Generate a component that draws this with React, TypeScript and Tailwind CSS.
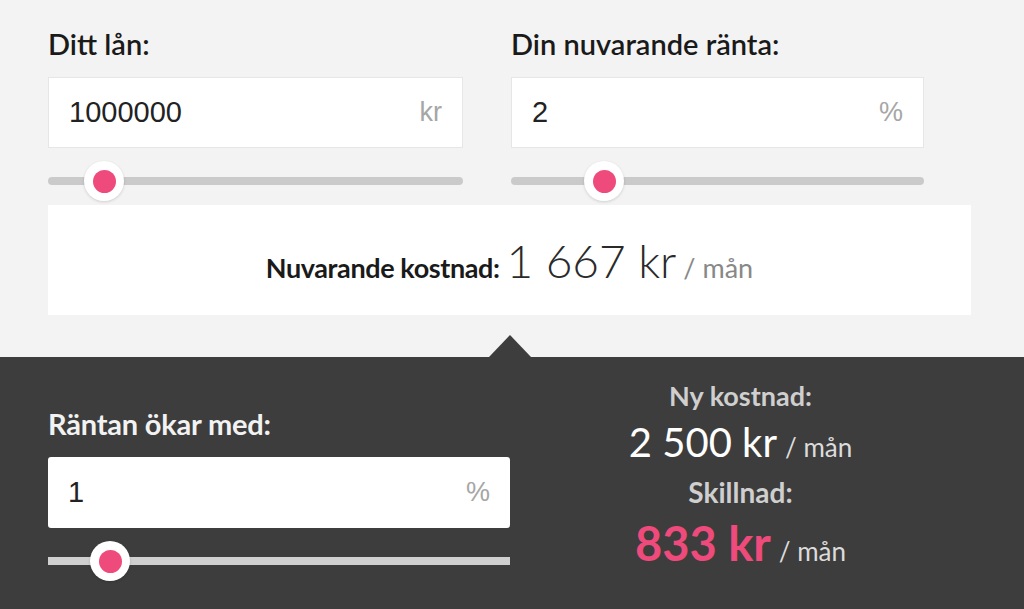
import React from "react";

const font = "font-['Lato','Open_Sans',sans-serif]";

function Slider({ pos, dark }: { pos: number; dark?: boolean }) {
  return (
    <div className="relative h-10 flex items-center">
      <div
        className={`w-full h-2 ${dark ? "bg-[#d0d0d0]" : "bg-[#cacaca] rounded-full"}`}
      />
      <div
        className="absolute top-1/2 -translate-x-1/2 -translate-y-1/2 w-10 h-10 rounded-full bg-white shadow-[0_1px_3px_rgba(0,0,0,0.15)] flex items-center justify-center"
        style={{ left: pos }}
      >
        <div className="w-[23px] h-[23px] rounded-full bg-[#ee4a7b]" />
      </div>
    </div>
  );
}

function Field({
  label,
  value,
  unit,
  dark,
  slider,
}: {
  label: string;
  value: string;
  unit: string;
  dark?: boolean;
  slider: number;
}) {
  return (
    <div className="flex flex-col">
      <div
        className={`${font} text-[29px] leading-[36px] ${
          dark ? "text-[#f2f2f2] font-bold tracking-[-0.2px]" : "text-[#1a1a1a] font-semibold"
        }`}
      >
        {label}
      </div>
      <div
        className={`mt-[15px] h-[71px] bg-white flex items-center justify-between pl-5 pr-5 ${
          dark ? "rounded-[3px]" : "border border-[#e6e6e6]"
        }`}
      >
        <span className="font-['Liberation_Sans',Arial,sans-serif] text-[29px] text-[#222]">
          {value}
        </span>
        <span className="font-['Liberation_Sans',Arial,sans-serif] text-[27px] text-[#a6a6a6]">
          {unit}
        </span>
      </div>
      <div className="mt-[13px]">
        <Slider pos={slider} dark={dark} />
      </div>
    </div>
  );
}

export default function App() {
  return (
    <div className="w-[1024px] h-[609px] overflow-hidden bg-[#f3f3f3] flex flex-col">
      <div className="pl-12 pr-[53px] pt-[26px] flex-1 flex flex-col">
        <div className="grid grid-cols-[415px_413px] gap-x-12">
          <Field label="Ditt lån:" value="1000000" unit="kr" slider={56} />
          <Field label="Din nuvarande ränta:" value="2" unit="%" slider={93} />
        </div>
        <div className="mt-[4px] h-[110px] bg-white flex items-baseline justify-center gap-[7px] pt-[30px]">
          <span className={`${font} text-[27px] font-bold text-[#1a1a1a] tracking-[-0.4px]`}>
            Nuvarande kostnad:
          </span>
          <span className={`${font} text-[46px] font-light text-[#2a2a2a] leading-[52px]`}>
            1 667 kr
          </span>
          <span className={`${font} text-[27px] text-[#888]`}>/ mån</span>
        </div>
        <div className="flex-1 flex items-end justify-center">
          <div className="w-0 h-0 border-l-[21px] border-r-[21px] border-b-[22px] border-l-transparent border-r-transparent border-b-[#3d3d3d]" />
        </div>
      </div>
      <div className="h-[252px] bg-[#3d3d3d] pl-12 pr-[53px] grid grid-cols-[462px_1fr]">
        <div className="pt-[49px]">
          <Field label="Räntan ökar med:" value="1" unit="%" dark slider={62} />
        </div>
        <div className={`${font} flex flex-col items-center pt-[23px]`}>
          <div className="text-[27px] font-bold text-[#cfcfcf] leading-[32px]">Ny kostnad:</div>
          <div className="mt-[6px] flex items-baseline gap-[8px] leading-[48px]">
            <span className="text-[40px] text-white">2 500 kr</span>
            <span className="text-[26px] text-[#dcdcdc]">/ mån</span>
          </div>
          <div className="mt-[5px] text-[28px] font-bold text-[#cfcfcf] leading-[32px]">Skillnad:</div>
          <div className="mt-[7px] flex items-baseline gap-[8px] leading-[56px]">
            <span className="text-[47px] font-bold text-[#ee4a7b]">833 kr</span>
            <span className="text-[26px] text-[#dcdcdc]">/ mån</span>
          </div>
        </div>
      </div>
    </div>
  );
}
